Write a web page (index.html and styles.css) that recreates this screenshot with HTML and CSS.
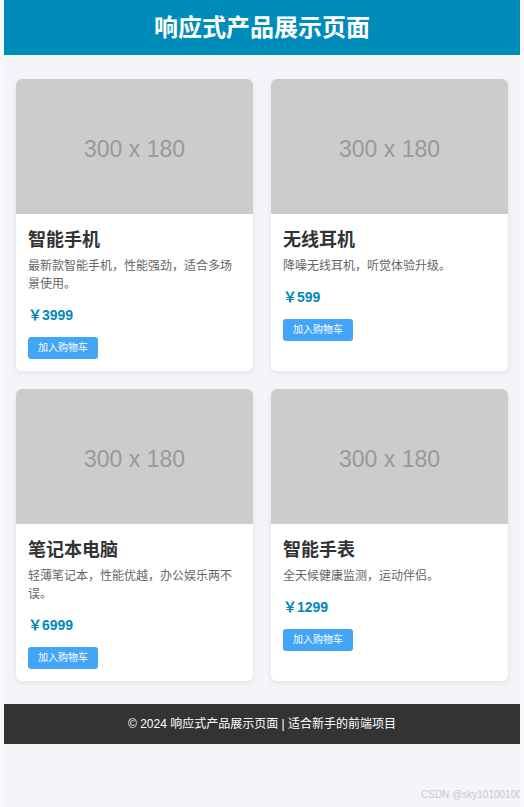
FILE: index.html
```html
<!DOCTYPE html>
<html lang="zh-CN">
  <head>
    <meta charset="UTF-8" />
    <meta name="viewport" content="width=device-width, initial-scale=1.0" />
    <title>响应式产品展示页面</title>
    <link rel="stylesheet" href="styles.css">
  </head>
  <body>
    <div class="page">
      <header class="site-header">
        <h1>响应式产品展示页面</h1>
      </header>

      <main class="products">
        <div class="card">
          <div class="thumb">300 x 180</div>
          <div class="info">
            <h3>智能手机</h3>
            <p class="desc">最新款智能手机，性能强劲，适合多场景使用。</p>
            <p class="price">￥3999</p>
            <button class="buy">加入购物车</button>
          </div>
        </div>
        <div class="card">
          <div class="thumb">300 x 180</div>
          <div class="info">
            <h3>无线耳机</h3>
            <p class="desc">降噪无线耳机，听觉体验升级。</p>
            <p class="price">￥599</p>
            <button class="buy">加入购物车</button>
          </div>
        </div>
        <div class="card">
          <div class="thumb">300 x 180</div>
          <div class="info">
            <h3>笔记本电脑</h3>
            <p class="desc">轻薄笔记本，性能优越，办公娱乐两不误。</p>
            <p class="price">￥6999</p>
            <button class="buy">加入购物车</button>
          </div>
        </div>
        <div class="card">
          <div class="thumb">300 x 180</div>
          <div class="info">
            <h3>智能手表</h3>
            <p class="desc">全天候健康监测，运动伴侣。</p>
            <p class="price">￥1299</p>
            <button class="buy">加入购物车</button>
          </div>
        </div>
      </main>

      <footer class="site-footer">
        © 2024 响应式产品展示页面 | 适合新手的前端项目
      </footer>

      <span class="watermark">CSDN @sky10100100</span>
    </div>
  </body>
</html>
```

FILE: styles.css
```css
html,
body {
  margin: 0;
  background: #f9fafc;
}
body {
  font-family: "Liberation Sans", "Noto Sans CJK SC", sans-serif;
  color: #333;
}
.page {
  position: relative;
  margin: 0 4px;
  min-height: 807px;
  background: #f4f5f9;
  overflow: hidden;
}
.site-header {
  background: #008cba;
  color: #fff;
  text-align: center;
  padding: 14px 0;
}
.site-header h1 {
  margin: 0;
  font-size: 24px;
  line-height: 27px;
  font-weight: bold;
}
.products {
  display: grid;
  grid-template-columns: 1fr 1fr;
  gap: 18px;
  padding: 24px 12px 23px;
}
.card {
  background: #fff;
  border-radius: 6px;
  overflow: hidden;
  box-shadow: 0 2px 6px rgba(0, 0, 0, 0.08);
}
.thumb {
  box-sizing: border-box;
  height: 135px;
  padding-top: 6px;
  background: #cccccc;
  color: #999;
  font-size: 23px;
  display: flex;
  justify-content: center;
  align-items: center;
}
.info {
  padding: 15px 12px 12px;
}
.info h3 {
  margin: 0 0 6px;
  font-size: 18px;
  line-height: 22px;
  color: #333;
}
.desc {
  margin: 0 0 12px;
  font-size: 12px;
  line-height: 18px;
  color: #666;
}
.price {
  margin: 0 0 12px;
  font-size: 14px;
  line-height: 20px;
  font-weight: bold;
  color: #0088b8;
}
.buy {
  display: block;
  border: none;
  border-radius: 3px;
  background: #42a5f5;
  color: #fff;
  font-family: inherit;
  font-size: 10px;
  line-height: 12px;
  padding: 5px 10px;
  cursor: pointer;
}
.site-footer {
  background: #333;
  color: #fff;
  text-align: center;
  font-size: 12px;
  line-height: 16px;
  padding: 12px 0;
}
.watermark {
  position: absolute;
  left: 417px;
  top: 789px;
  font-size: 10px;
  line-height: 12px;
  color: #c8c8c8;
  white-space: nowrap;
}
```
